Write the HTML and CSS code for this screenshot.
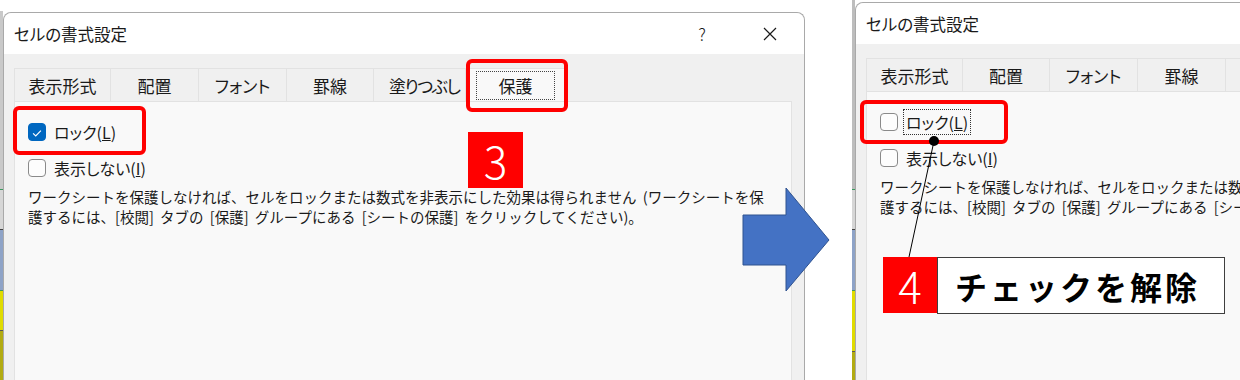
FILE: index.html
```html
<!DOCTYPE html>
<html lang="ja">
<head>
    <meta charset="UTF-8">
    <title>セルの書式設定 - 保護</title>
    <link rel="stylesheet" href="styles.css">
</head>
<body>

    <div class="stage">
        <div class="strip strip-left"></div>

        <!-- before: lock is checked -->
        <div class="dialog dialog-left">
            <div class="titlebar">
                <span class="title">セルの書式設定</span>
                <span class="help">?</span>
                <span class="close">
                    <svg width="14" height="14" viewBox="0 0 14 14"><path d="M1 1 L13 13 M13 1 L1 13" stroke="#1a1a1a" stroke-width="1.2"/></svg>
                </span>
            </div>
            <div class="dialog-body">
                <div class="tabs">
                    <div class="tab w97">表示形式</div>
                    <div class="tab w88">配置</div>
                    <div class="tab w88">フォント</div>
                    <div class="tab w87">罫線</div>
                    <div class="tab w92 tight">塗りつぶし</div>
                    <div class="tab tab-active w100"><span class="focus">保護</span></div>
                </div>
                <div class="panel">
                    <label class="check-row">
                        <span class="box checked">
                            <svg width="18" height="18" viewBox="0 0 18 18"><path d="M4.6 9.4 L7.6 12.3 L13.4 6.3" fill="none" stroke="#fff" stroke-width="1.3"/></svg>
                        </span>
                        <span class="label">ロック(<u>L</u>)</span>
                    </label>
                    <label class="check-row">
                        <span class="box"></span>
                        <span class="label">表示しない(<u>I</u>)</span>
                    </label>
                    <p class="note">ワークシートを保護しなければ、セルをロックまたは数式を非表示にした効果は得られません (ワークシートを保<br>護するには、[校閲] タブの [保護] グループにある [シートの保護] をクリックしてください)。</p>
                </div>
            </div>

            <div class="mark mark-tab"></div>
            <div class="mark mark-lock-on"></div>
            <div class="step step-3">3</div>
        </div>

        <div class="gap"></div>
        <div class="strip strip-right"></div>

        <!-- after: lock is cleared -->
        <div class="dialog dialog-right">
            <div class="titlebar">
                <span class="title">セルの書式設定</span>
            </div>
            <div class="dialog-body">
                <div class="tabs">
                    <div class="tab w97">表示形式</div>
                    <div class="tab w87">配置</div>
                    <div class="tab w88">フォント</div>
                    <div class="tab w88">罫線</div>
                    <div class="tab w92 tight">塗りつぶし</div>
                    <div class="tab tab-active w100"><span class="focus">保護</span></div>
                </div>
                <div class="panel">
                    <label class="check-row">
                        <span class="box"></span>
                        <span class="label focused">ロック(<u>L</u>)</span>
                    </label>
                    <label class="check-row">
                        <span class="box"></span>
                        <span class="label">表示しない(<u>I</u>)</span>
                    </label>
                    <p class="note">ワークシートを保護しなければ、セルをロックまたは数式を非表示にした効果は得られません (ワークシートを保<br>護するには、[校閲] タブの [保護] グループにある [シートの保護] をクリックしてください)。</p>
                </div>
            </div>

            <div class="mark mark-lock-off"></div>
        </div>
    </div>

    <!-- arrow and callout drawn over both dialogs -->
    <svg class="overlay" width="1240" height="380" viewBox="0 0 1240 380">
        <polygon points="743,215 786,215 786,188 829,240 786,291 786,265 743,265" fill="#4472c4" stroke="#2f528f" stroke-width="1"/>
        <line x1="934" y1="141" x2="909" y2="257" stroke="#000" stroke-width="1"/>
        <circle cx="934" cy="141" r="5" fill="#000"/>
    </svg>
    <div class="step step-4">4</div>
    <div class="callout">チェックを解除</div>

</body>
</html>
```

FILE: styles.css
```css
* {
    margin: 0;
    padding: 0;
    box-sizing: border-box;
}
body {
    width: 1240px;
    height: 380px;
    overflow: hidden;
    position: relative;
    background-color: #ffffff;
    font-family: "Noto Sans CJK JP", "Noto Sans", sans-serif;
    color: #1a1a1a;
}
.stage {
    display: flex;
    height: 380px;
    overflow: hidden;
}
.strip {
    flex: none;
    width: 3px;
    height: 380px;
}
.strip-left {
    background: linear-gradient(to bottom, #ffffff 0 11px, #c9c9c9 11px 189px, #3c9a5f 189px 190px, #d6d6d6 190px 229px, #444 229px 230px, #8ea3c7 230px 290px, #3c9a5f 290px 291px, #e0dc00 291px 330px, #555 330px 331px, #b2ab12 331px);
}
.strip-right {
    background: linear-gradient(to bottom, #bdbdbd 0 189px, #3c9a5f 189px 190px, #d6d6d6 190px 229px, #444 229px 230px, #8ea3c7 230px 290px, #3c9a5f 290px 291px, #e0dc00 291px 351px, #555 351px 352px, #b2ab12 352px);
}
.gap {
    flex: none;
    width: 47px;
}

/* dialog */
.dialog {
    flex: none;
    position: relative;
    width: 802px;
    height: 400px;
    display: flex;
    flex-direction: column;
    background-color: #f0f0f0;
    border: 1px solid #a9a9a9;
    border-bottom: none;
    border-radius: 8px 8px 0 0;
}
.dialog-left {
    margin-top: 12px;
}
.dialog-right {
    margin-top: 2px;
}
.titlebar {
    height: 41px;
    display: flex;
    align-items: center;
    padding-left: 10px;
    background-color: #ffffff;
    border-radius: 8px 8px 0 0;
    font-size: 16.5px;
}
.title {
    flex: 1;
    font-feature-settings: "palt";
}
.help {
    width: 20px;
    text-align: center;
    margin-right: 51px;
    font-size: 17px;
    font-weight: 300;
}
.close {
    display: flex;
    margin-right: 27px;
}
.dialog-body {
    flex: 1;
    display: flex;
    flex-direction: column;
    padding: 14px 12px 0 10px;
}
.tabs {
    display: flex;
    height: 33px;
}
.tab {
    flex: none;
    display: flex;
    align-items: center;
    justify-content: center;
    background-color: #f0f0f0;
    border: 1px solid #e2e2e2;
    border-bottom: none;
    border-left: none;
    font-size: 17px;
    font-feature-settings: "palt";
}
.tab:first-child {
    border-left: 1px solid #e2e2e2;
}
.tab.tight {
    justify-content: flex-start;
    padding-left: 15px;
    letter-spacing: -1.5px;
}
.w97 { width: 97px; }
.w88 { width: 88px; }
.w87 { width: 87px; }
.w92 { width: 92px; }
.w100 { width: 100px; }
.tab-active {
    background-color: #f9f9f9;
    padding: 2px 10px 1px;
}
.tab-active .focus {
    flex: 1;
    height: 100%;
    display: flex;
    align-items: center;
    justify-content: center;
    border: 1px dotted #444;
}
.panel {
    flex: 1;
    background-color: #f9f9f9;
    border: 1px solid #e2e2e2;
    padding: 20px 0 0 13px;
}
.check-row {
    display: flex;
    align-items: center;
    gap: 8px;
    height: 19px;
    margin-bottom: 17px;
    font-size: 16px;
    font-feature-settings: "palt";
}
.box {
    width: 18px;
    height: 18px;
    border: 1px solid #8a8a8a;
    border-radius: 4px;
    background-color: #fdfdfd;
    display: flex;
}
.box.checked {
    background-color: #0067c0;
    border-color: #0067c0;
}
.label.focused {
    border: 1px dotted #333;
    padding: 0 2px;
    margin-left: -3px;
}
.note {
    margin-top: -7px;
    font-size: 14.5px;
    line-height: 20px;
    word-spacing: 3px;
    white-space: nowrap;
}

/* red highlights and step numbers */
.mark {
    position: absolute;
    border: 4px solid #ff0000;
    border-radius: 6px;
}
.mark-tab {
    left: 462px;
    top: 46px;
    width: 102px;
    height: 53px;
}
.mark-lock-on {
    left: 9px;
    top: 93px;
    width: 133px;
    height: 49px;
}
.mark-lock-off {
    left: 4px;
    top: 97px;
    width: 148px;
    height: 44px;
}
.step {
    position: absolute;
    background-color: #ff0000;
    color: #ffffff;
    font-size: 44px;
    font-weight: 300;
    display: flex;
    align-items: center;
    justify-content: center;
}
.step-3 {
    left: 464px;
    top: 119px;
    width: 55px;
    height: 56px;
}
.step-4 {
    left: 883px;
    top: 257px;
    width: 54px;
    height: 56px;
    z-index: 6;
}
.overlay {
    position: absolute;
    left: 0;
    top: 0;
    z-index: 5;
}
.callout {
    position: absolute;
    left: 937px;
    top: 257px;
    width: 288px;
    height: 57px;
    z-index: 6;
    display: flex;
    align-items: center;
    padding-left: 17px;
    background-color: #ffffff;
    border: 1.5px solid #3f3f3f;
    font-size: 32px;
    font-weight: 700;
    letter-spacing: 3px;
    color: #000000;
}
```
